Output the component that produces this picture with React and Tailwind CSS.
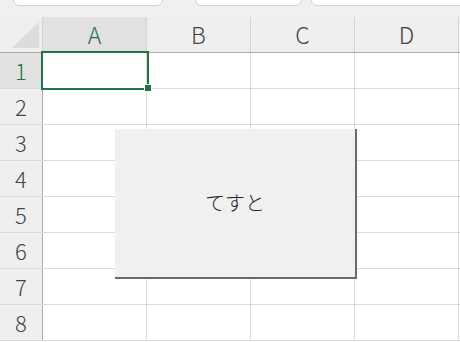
const COLS = ['A', 'B', 'C', 'D'];
const ROWS = [1, 2, 3, 4, 5, 6, 7, 8];
const FONT = { fontFamily: '"Noto Sans CJK JP", "Noto Sans", sans-serif' };

// tops of the name box / formula bar, cut off by the window edge
function TopStrip() {
  return (
    <div className="flex h-[17px] items-start overflow-hidden bg-[#f0f0f0] pl-[13px]">
      <div className="-mt-[6px] h-[12px] w-[150px] shrink-0 rounded-b-[6px] border border-[#d2d2d2] bg-white" />
      <div className="-mt-[6px] ml-[32px] h-[12px] w-[107px] shrink-0 rounded-b-[6px] border border-[#d2d2d2] bg-white" />
      <div className="-mt-[6px] ml-[9px] -mr-[10px] h-[12px] flex-1 rounded-b-[6px] border border-[#d2d2d2] bg-white" />
    </div>
  );
}

function HeaderRow() {
  return (
    <div className="flex h-[36px] border-b border-[#ababab] bg-[#efefef]">
      <div className="flex w-[43px] shrink-0 items-end justify-end border-r border-[#d4d4d4] pb-[4px] pr-[3px]">
        <svg width="27" height="26" viewBox="0 0 27 26">
          <polygon points="0,26 27,0 27,26" fill="#dcdcdc" />
        </svg>
      </div>
      {COLS.map((c, i) => (
        <div
          key={c}
          className={`flex w-[104px] shrink-0 items-center justify-center border-r border-[#d4d4d4] text-[23px] font-light ${
            i === 0 ? 'bg-[#e1e1e1] text-[#217346]' : 'text-[#444]'
          }`}
        >
          {c}
        </div>
      ))}
      <div className="flex-1" />
    </div>
  );
}

function Row({ n }) {
  return (
    <div className="flex h-[36px] border-b border-[#dadada]">
      <div
        className={`flex w-[43px] shrink-0 items-center justify-center border-r border-[#ababab] text-[22px] font-light ${
          n === 1 ? 'bg-[#e1e1e1] text-[#217346]' : 'bg-[#efefef] text-[#444]'
        }`}
      >
        {n}
      </div>
      {COLS.map((c) => (
        <div key={c} className="w-[104px] shrink-0 border-r border-[#dadada] bg-white" />
      ))}
      <div className="flex-1 bg-white" />
    </div>
  );
}

export default function App() {
  return (
    <div className="relative h-[342px] w-[460px] overflow-hidden bg-white" style={FONT}>
      <TopStrip />
      <HeaderRow />
      {ROWS.map((n) => (
        <Row key={n} n={n} />
      ))}

      {/* active cell A1 with fill handle */}
      <div className="absolute left-[41px] top-[51px] h-[39px] w-[108px] border-2 border-[#217346]">
        <div className="absolute -bottom-[4px] -right-[5px] h-[8px] w-[8px] border border-white bg-[#217346]" />
      </div>

      {/* form button floating over the sheet */}
      <div className="absolute left-[115px] top-[129px] flex h-[150px] w-[242px] items-center justify-center border-b-2 border-r-2 border-[#696969] bg-[#f0f0f0] text-[20px] font-light text-[#222]">
        てすと
      </div>
    </div>
  );
}
